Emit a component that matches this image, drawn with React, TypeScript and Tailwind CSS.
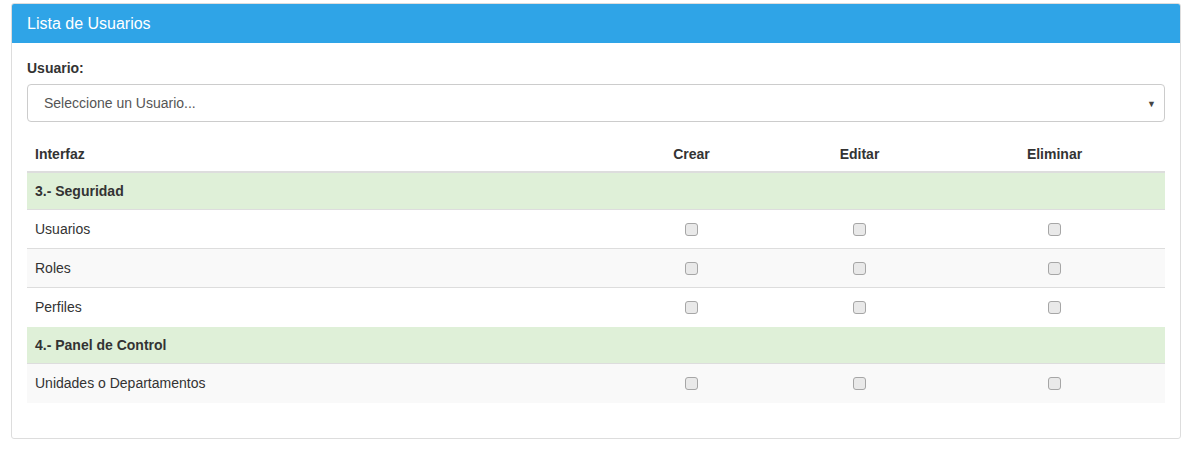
const sections = [
	{
		title: "3.- Seguridad",
		items: ["Usuarios", "Roles", "Perfiles"],
	},
	{
		title: "4.- Panel de Control",
		items: ["Unidades o Departamentos"],
	},
];

const cols = "grid grid-cols-[581px_167px_169px_1fr]";

const Check = () => (
	<span className="inline-block h-[13px] w-[13px] rounded-[3px] border border-[#a6a6a6] bg-[#e9e9e9]" />
);

export default function App() {
	let stripe = 0;
	return (
		<div
			className="bg-white pl-[11px] pt-[3px] text-[14px] text-[#333]"
			style={{ fontFamily: '"Liberation Sans", Arial, sans-serif' }}
		>
			<div className="w-[1170px] rounded-[3px] border border-[#dddddd]">
				<div className="flex h-[39px] items-center rounded-t-[2px] bg-[#2fa4e7] px-[15px] text-[16px] text-white">
					Lista de Usuarios
				</div>
				<div className="px-[15px] pb-[35px] pt-[15px]">
					<div className="mb-[6px] h-[20px] leading-[20px] font-bold">Usuario:</div>
					<div className="relative mb-[14px] flex h-[38px] items-center rounded-[4px] border border-[#cccccc] pl-[16px] text-[#555]">
						Seleccione un Usuario...
						<span className="absolute right-[8px] top-[13px] text-[9px] text-[#444]">▼</span>
					</div>

					<div className={`${cols} h-[37px] items-center border-b-2 border-[#dddddd] pt-[2px] font-bold`}>
						<div className="px-[8px]">Interfaz</div>
						<div className="text-center">Crear</div>
						<div className="text-center">Editar</div>
						<div className="text-center">Eliminar</div>
					</div>

					{sections.map((s) => (
						<div key={s.title}>
							<div className="flex h-[37px] items-center border-b border-[#dddddd] bg-[#dff0d8] px-[8px] font-bold">
								{s.title}
							</div>
							{s.items.map((item) => {
								stripe++;
								const last = item === s.items[s.items.length - 1];
								return (
									<div
										key={item}
										className={`${cols} h-[39px] items-center ${
											stripe % 2 === 0 ? "bg-[#f9f9f9]" : "bg-white"
										} ${last ? "" : "border-b border-[#dddddd]"}`}
									>
										<div className="px-[8px]">{item}</div>
										<div className="flex justify-center">
											<Check />
										</div>
										<div className="flex justify-center">
											<Check />
										</div>
										<div className="flex justify-center">
											<Check />
										</div>
									</div>
								);
							})}
						</div>
					))}
				</div>
			</div>
		</div>
	);
}
